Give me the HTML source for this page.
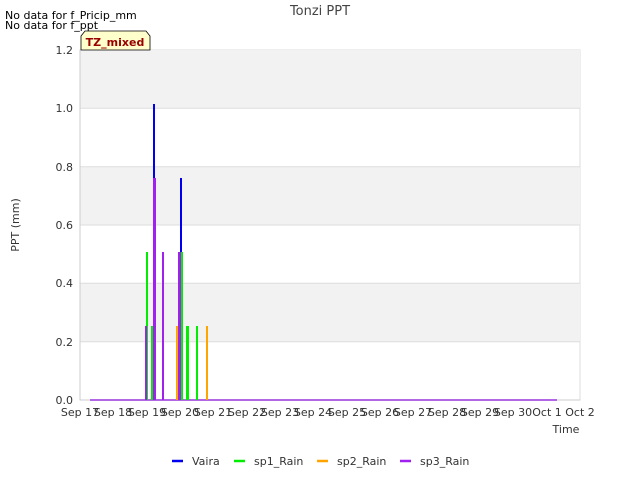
<!DOCTYPE html>
<html><head><style>body{margin:0;background:#fff}svg text{font-family:"DejaVu Sans","Liberation Sans",sans-serif}</style></head>
<body>
<svg width="640" height="480" viewBox="0 0 640 480" xmlns="http://www.w3.org/2000/svg">
<rect width="640" height="480" fill="#fff"/>
<rect x="80" y="50" width="500" height="350" fill="#fff" stroke="#ddd"/>
<rect x="80" y="50" width="500" height="58.3" fill="#f2f2f2"/>
<rect x="80" y="166.7" width="500" height="58.3" fill="#f2f2f2"/>
<rect x="80" y="283.3" width="500" height="58.3" fill="#f2f2f2"/>
<g stroke="#ddd" stroke-width="1">
<line x1="80" y1="108.3" x2="580" y2="108.3"/><line x1="80" y1="166.7" x2="580" y2="166.7"/>
<line x1="80" y1="225" x2="580" y2="225"/><line x1="80" y1="283.3" x2="580" y2="283.3"/>
<line x1="80" y1="341.7" x2="580" y2="341.7"/>
</g>
<line x1="80" y1="50" x2="80" y2="400" stroke="#ccc"/>
<line x1="80" y1="400" x2="580" y2="400" stroke="#ccc"/>
<g font-size="11" fill="#333" text-anchor="end">
<text x="73" y="54">1.2</text><text x="73" y="112">1.0</text><text x="73" y="171">0.8</text>
<text x="73" y="229">0.6</text><text x="73" y="287">0.4</text><text x="73" y="346">0.2</text><text x="73" y="404">0.0</text>
</g>
<g font-size="11" fill="#333" text-anchor="middle">
<text x="80" y="416">Sep 17</text><text x="113" y="416">Sep 18</text><text x="147" y="416">Sep 19</text>
<text x="180" y="416">Sep 20</text><text x="213" y="416">Sep 21</text><text x="247" y="416">Sep 22</text>
<text x="280" y="416">Sep 23</text><text x="313" y="416">Sep 24</text><text x="347" y="416">Sep 25</text>
<text x="380" y="416">Sep 26</text><text x="413" y="416">Sep 27</text><text x="447" y="416">Sep 28</text>
<text x="480" y="416">Sep 29</text><text x="513" y="416">Sep 30</text><text x="547" y="416">Oct 1</text>
<text x="580" y="416">Oct 2</text>
</g>
<text x="566" y="433" font-size="11" fill="#333" text-anchor="middle">Time</text>
<text x="19" y="225" font-size="11" fill="#333" text-anchor="middle" transform="rotate(-90 19 225)">PPT (mm)</text>
<text x="320" y="15" font-size="13" fill="#444" text-anchor="middle">Tonzi PPT</text>
<text x="5" y="19" font-size="11" fill="#000">No data for f_Pricip_mm</text>
<text x="5" y="29" font-size="11" fill="#000">No data for f_ppt</text>
<path d="M81 50 V36 L85 31 H146 L150 36 V50 Z" fill="#ffffcc" stroke="#000" stroke-width="0.8"/>
<text x="115" y="46" font-size="11" font-weight="bold" fill="#990000" text-anchor="middle">TZ_mixed</text>
<line x1="90" y1="400" x2="557" y2="400" stroke="#9933dd" stroke-width="1.5"/>
<g>
<rect x="146" y="252" width="2" height="148" fill="#00ee00"/>
<rect x="145" y="326" width="2" height="74" fill="#a020f0"/>
<rect x="151" y="326" width="2" height="74" fill="#00ee00"/>
<rect x="153" y="104" width="2" height="296" fill="#0000ee"/>
<rect x="153" y="178" width="3" height="222" fill="#a020f0"/>
<rect x="162" y="252" width="2" height="148" fill="#a020f0"/>
<rect x="176" y="326" width="2" height="74" fill="#ffa500"/>
<rect x="178" y="252" width="3" height="148" fill="#a020f0"/>
<rect x="180" y="178" width="2" height="74" fill="#0000ee"/>
<rect x="181" y="252" width="2" height="148" fill="#00ee00"/>
<rect x="186" y="326" width="3" height="74" fill="#00ee00"/>
<rect x="196" y="326" width="2" height="74" fill="#00ee00"/>
<rect x="206" y="326" width="2" height="74" fill="#ffa500"/>
</g>
<g font-size="11" fill="#333">
<line x1="172" y1="461" x2="183" y2="461" stroke="#0000ee" stroke-width="2.5"/><text x="192" y="465">Vaira</text>
<line x1="234" y1="461" x2="245" y2="461" stroke="#00ee00" stroke-width="2.5"/><text x="254" y="465">sp1_Rain</text>
<line x1="317" y1="461" x2="328" y2="461" stroke="#ffa500" stroke-width="2.5"/><text x="337" y="465">sp2_Rain</text>
<line x1="400" y1="461" x2="411" y2="461" stroke="#a020f0" stroke-width="2.5"/><text x="420" y="465">sp3_Rain</text>
</g>
</svg>
</body></html>
